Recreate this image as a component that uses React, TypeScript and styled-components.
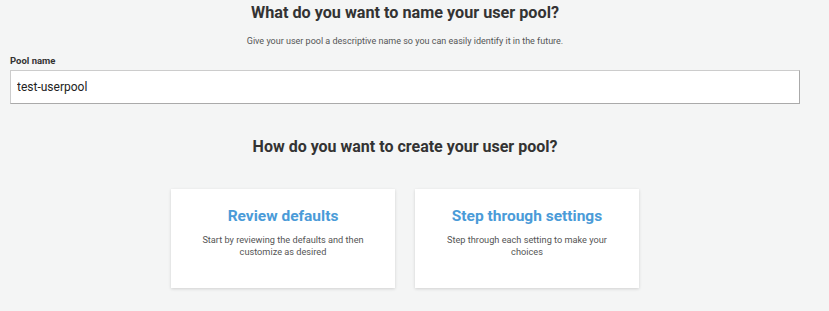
import styled, { createGlobalStyle } from "styled-components"

const GlobalStyle = createGlobalStyle`
  html, body {
    margin: 0;
    background: #f4f5f5;
    font-family: Roboto, "Liberation Sans", sans-serif;
    color: #333;
  }
`

interface Choice {
  title: string
  text: string
}

const choices: Choice[] = [
  { title: "Review defaults", text: "Start by reviewing the defaults and then customize as desired" },
  { title: "Step through settings", text: "Step through each setting to make your choices" },
]

export default function App() {
  return (
    <Page>
      <GlobalStyle />
      <Title>What do you want to name your user pool?</Title>
      <Subtitle>Give your user pool a descriptive name so you can easily identify it in the future.</Subtitle>
      <Field>
        <Label htmlFor="pool-name">Pool name</Label>
        <Input id="pool-name" defaultValue="test-userpool" />
      </Field>
      <SectionTitle>How do you want to create your user pool?</SectionTitle>
      <Cards>
        {choices.map((c) => (
          <Card key={c.title}>
            <CardTitle>{c.title}</CardTitle>
            <CardText>{c.text}</CardText>
          </Card>
        ))}
      </Cards>
    </Page>
  )
}

const Page = styled.div`
  width: 829px;
  height: 311px;
  padding: 0 29px 0 10px;
  box-sizing: border-box;
  display: flex;
  flex-direction: column;
  overflow: hidden;
`
const Title = styled.h1`
  margin: 3px 0 0;
  font-size: 16.2px;
  line-height: 20px;
  font-weight: 700;
  text-align: center;
  color: #333;
`
const Subtitle = styled.p`
  margin: 12px 0 0;
  font-size: 9px;
  line-height: 12px;
  text-align: center;
  color: #555;
`
const Field = styled.div`
  display: flex;
  flex-direction: column;
  margin-top: 8px;
`
const Label = styled.label`
  font-size: 9.5px;
  line-height: 12px;
  font-weight: 700;
  color: #333;
  margin-bottom: 3px;
`
const Input = styled.input`
  height: 34px;
  box-sizing: border-box;
  padding: 0 6px;
  border: 1px solid #aaa;
  border-top-color: #ccc;
  border-left-color: #ccc;
  background: #fff;
  font-family: inherit;
  font-size: 12px;
  color: #222;
  outline: none;
`
const SectionTitle = styled.h2`
  margin: 33px 0 0;
  font-size: 16px;
  line-height: 20px;
  font-weight: 700;
  text-align: center;
  color: #333;
`
const Cards = styled.div`
  display: flex;
  justify-content: center;
  gap: 20px;
  margin-top: 32px;
`
const Card = styled.div`
  width: 224px;
  height: 99px;
  box-sizing: border-box;
  padding: 17px 24px 0;
  background: #fff;
  box-shadow: 0 1px 3px rgba(0, 0, 0, 0.15);
  text-align: center;
`
const CardTitle = styled.h3`
  margin: 0;
  font-size: 15.5px;
  line-height: 20px;
  font-weight: 700;
  color: #4a9bd8;
`
const CardText = styled.p`
  margin: 8px 0 0;
  font-size: 9.2px;
  line-height: 12px;
  color: #555;
`
